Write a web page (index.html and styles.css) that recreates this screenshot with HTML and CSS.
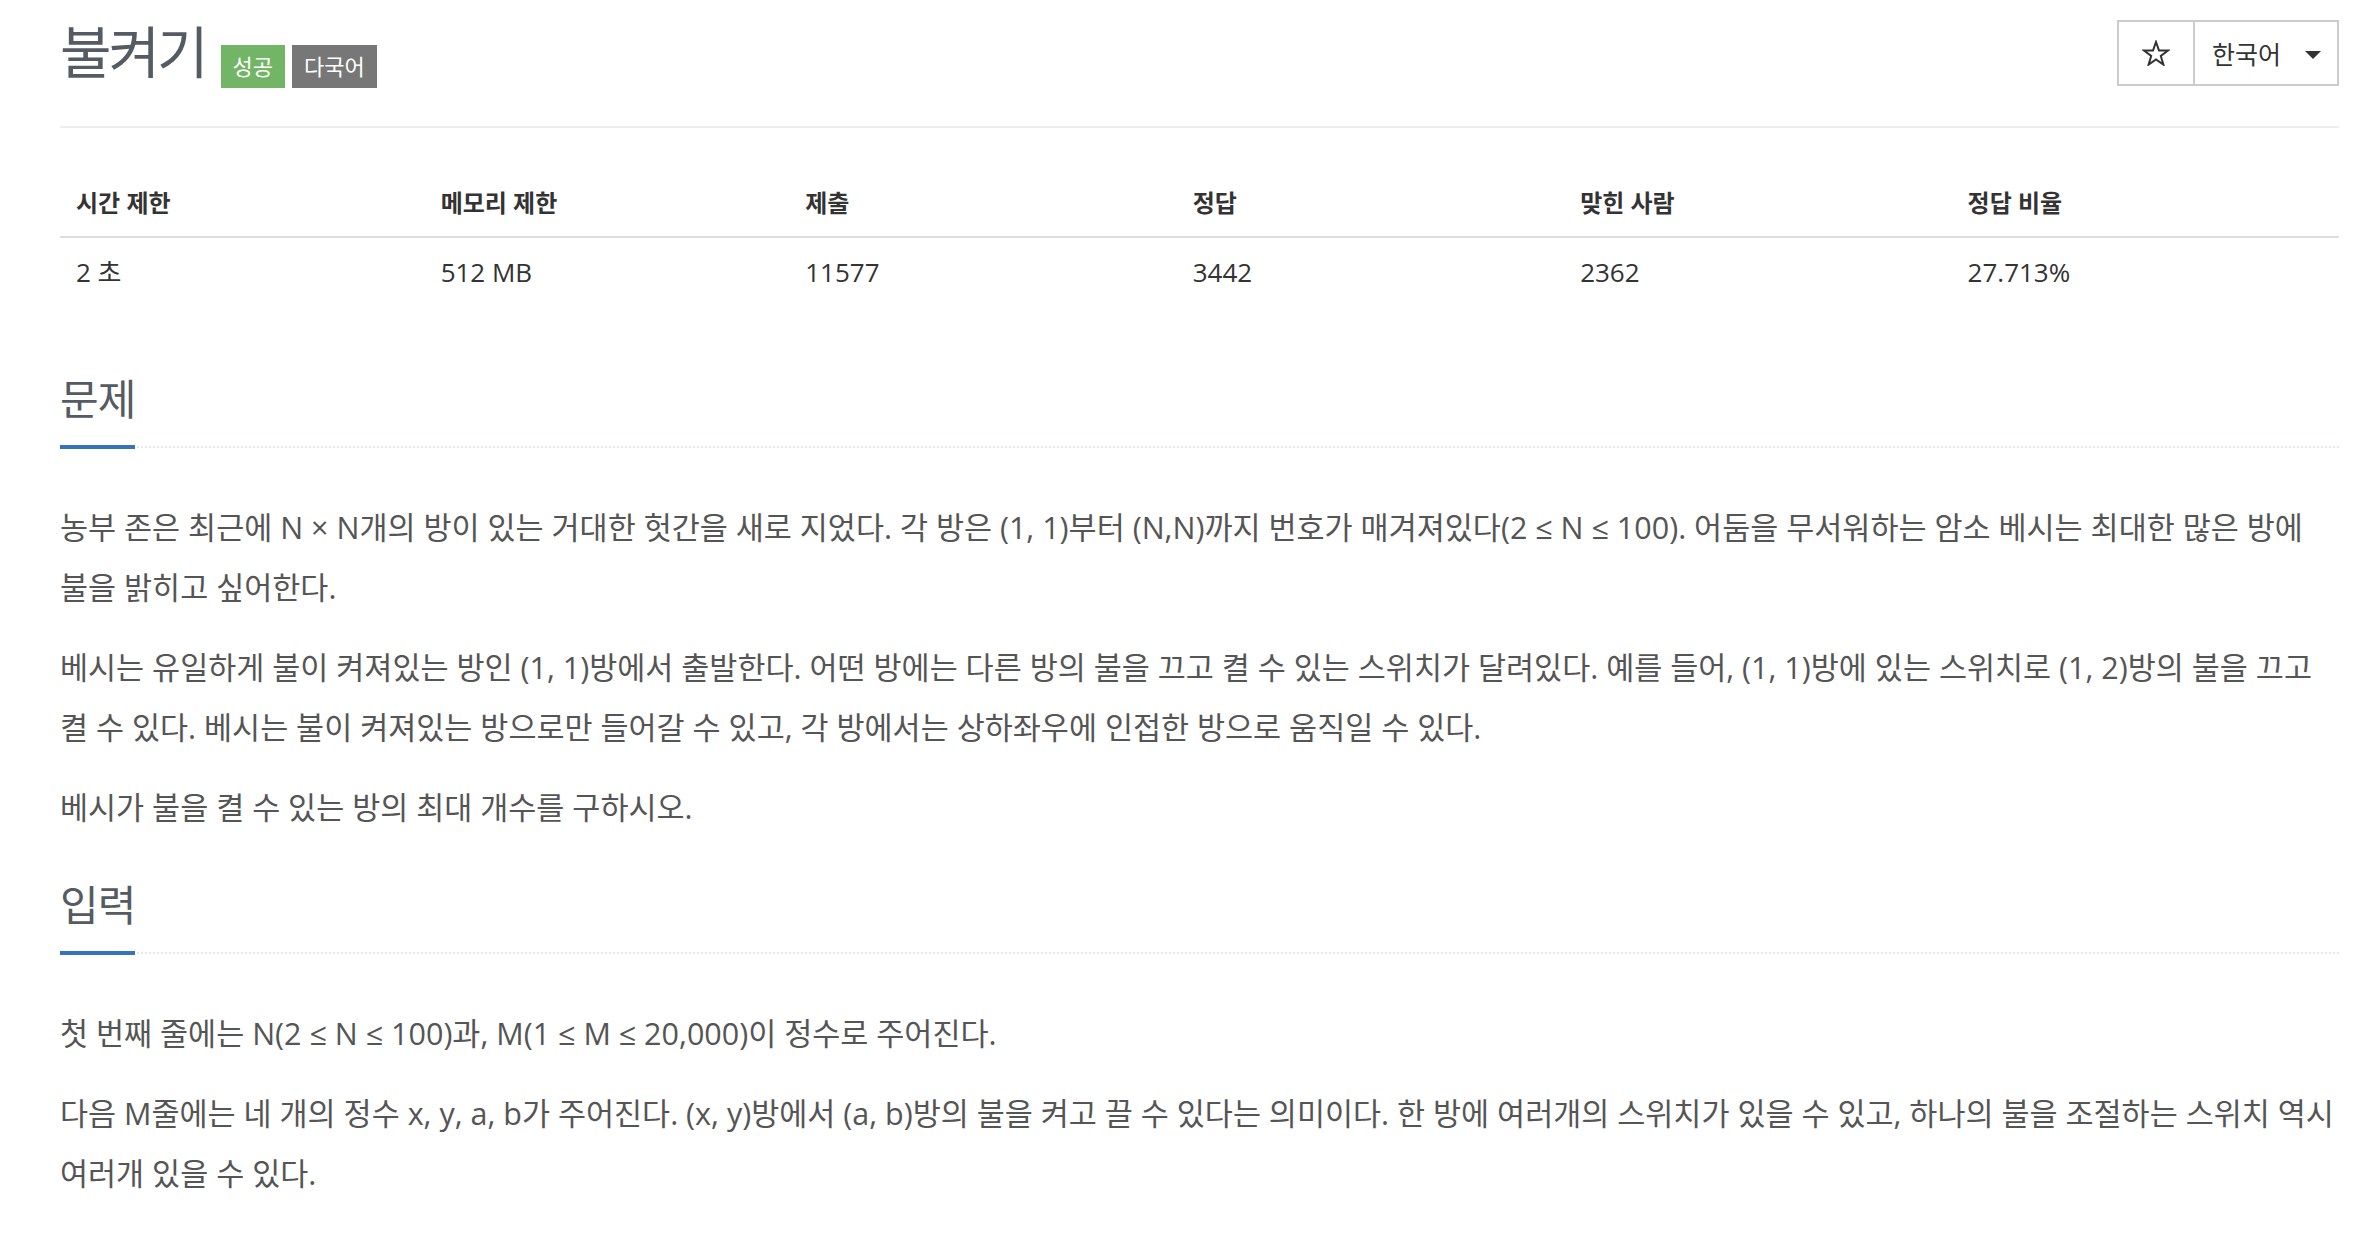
FILE: index.html
```html
<!DOCTYPE html>
<html lang="ko">
<head>
    <meta charset="UTF-8">
    <meta name="viewport" content="width=device-width, initial-scale=1.0">
    <title>불켜기</title>
    <link rel="stylesheet" href="styles.css">
</head>
<body>
    <div class="container">
        <!-- 문제 제목 -->
        <div class="page-header">
            <div class="title-row">
                <h1 class="problem-title">불켜기</h1>
                <span class="problem-label label-ac">성공</span>
                <span class="problem-label label-lang">다국어</span>
            </div>
            <div class="btn-group">
                <button class="btn btn-star" type="button">
                    <svg width="28" height="26" viewBox="0 0 28 26">
                        <polygon points="14,2 17,10.6 26,10.6 18.8,16 21.4,24.6 14,19.4 6.6,24.6 9.2,16 2,10.6 11,10.6" fill="none" stroke="#333" stroke-width="2" stroke-linejoin="miter"/>
                    </svg>
                </button>
                <button class="btn btn-lang" type="button">한국어 <span class="caret"></span></button>
            </div>
        </div>

        <!-- 제한 정보 -->
        <table class="problem-info">
            <thead>
                <tr>
                    <th>시간 제한</th>
                    <th>메모리 제한</th>
                    <th>제출</th>
                    <th>정답</th>
                    <th>맞힌 사람</th>
                    <th>정답 비율</th>
                </tr>
            </thead>
            <tbody>
                <tr>
                    <td>2 초</td>
                    <td>512 MB</td>
                    <td>11577</td>
                    <td>3442</td>
                    <td>2362</td>
                    <td>27.713%</td>
                </tr>
            </tbody>
        </table>

        <!-- 문제 -->
        <section class="problem-section">
            <div class="headline">
                <h2>문제</h2>
            </div>
            <div class="problem-text">
                <p>농부 존은 최근에 N × N개의 방이 있는 거대한 헛간을 새로 지었다. 각 방은 (1, 1)부터 (N,N)까지 번호가 매겨져있다(2 ≤ N ≤ 100). 어둠을 무서워하는 암소 베시는 최대한 많은 방에<br>불을 밝히고 싶어한다.</p>
                <p>베시는 유일하게 불이 켜져있는 방인 (1, 1)방에서 출발한다. 어떤 방에는 다른 방의 불을 끄고 켤 수 있는 스위치가 달려있다. 예를 들어, (1, 1)방에 있는 스위치로 (1, 2)방의 불을 끄고<br>켤 수 있다. 베시는 불이 켜져있는 방으로만 들어갈 수 있고, 각 방에서는 상하좌우에 인접한 방으로 움직일 수 있다.</p>
                <p>베시가 불을 켤 수 있는 방의 최대 개수를 구하시오.</p>
            </div>
        </section>

        <!-- 입력 -->
        <section class="problem-section">
            <div class="headline">
                <h2>입력</h2>
            </div>
            <div class="problem-text">
                <p>첫 번째 줄에는 N(2 ≤ N ≤ 100)과, M(1 ≤ M ≤ 20,000)이 정수로 주어진다.</p>
                <p>다음 M줄에는 네 개의 정수 x, y, a, b가 주어진다. (x, y)방에서 (a, b)방의 불을 켜고 끌 수 있다는 의미이다. 한 방에 여러개의 스위치가 있을 수 있고, 하나의 불을 조절하는 스위치 역시<br>여러개 있을 수 있다.</p>
            </div>
        </section>
    </div>
</body>
</html>
```

FILE: styles.css
```css
body {
    font-family: "Open Sans", "Noto Sans CJK KR", sans-serif;
    color: #333;
    margin: 0;
    background: #fff;
}
.container {
    padding: 0 37px 0 60px;
}
.page-header {
    display: flex;
    justify-content: space-between;
    align-items: flex-start;
    padding-top: 20px;
    height: 106px;
    border-bottom: 2px solid #eee;
}
.title-row {
    display: flex;
    align-items: flex-start;
}
.problem-title {
    margin: 0;
    font-size: 56px;
    line-height: 62px;
    font-weight: 400;
    letter-spacing: -3px;
    color: #555b63;
}
.problem-label {
    margin-top: 25px;
    height: 43px;
    line-height: 43px;
    padding: 0 12px;
    font-size: 22px;
    color: #fff;
}
.label-ac {
    margin-left: 15px;
    background-color: #73b566;
}
.label-lang {
    margin-left: 7px;
    background-color: #777;
}
.btn-group {
    display: flex;
    height: 66px;
}
.btn {
    font-family: inherit;
    background: #fff;
    border: 2px solid #ccc;
    color: #333;
    margin: 0;
    cursor: pointer;
    display: flex;
    align-items: center;
}
.btn-star {
    width: 78px;
    justify-content: center;
    padding: 0;
}
.btn-lang {
    width: 144px;
    border-left: none;
    padding: 0 16px 0 17px;
    font-size: 25px;
    justify-content: space-between;
}
.caret {
    width: 0;
    height: 0;
    border-top: 8px solid #333;
    border-left: 8px solid transparent;
    border-right: 8px solid transparent;
    margin-top: 4px;
}
.problem-info {
    width: 100%;
    border-collapse: collapse;
    margin-top: 41px;
    margin-bottom: 44px;
    table-layout: fixed;
}
.problem-info th, .problem-info td {
    box-sizing: border-box;
    text-align: left;
    padding: 16px;
    line-height: 37px;
}
.problem-info th {
    padding: 15px 16px;
    font-size: 24px;
    font-weight: 700;
    border-bottom: 2px solid #ddd;
}
.problem-info th:nth-child(1), .problem-info th:nth-child(2) {
    width: 16%;
}
.problem-info td {
    font-size: 26px;
}
.problem-section {
    padding-top: 22px;
}
.headline {
    border-bottom: 2px dotted #e4e9f0;
    margin-bottom: 49px;
}
.headline h2 {
    display: inline-block;
    margin: 0 0 -3px;
    padding: 2px 0 22px;
    font-size: 42px;
    line-height: 48px;
    font-weight: 400;
    letter-spacing: -1px;
    color: #555b63;
    border-bottom: 4px solid #3572c0;
}
.problem-text p {
    margin: 0 0 20px;
    font-size: 30.5px;
    line-height: 60px;
    color: #555;
}
```
